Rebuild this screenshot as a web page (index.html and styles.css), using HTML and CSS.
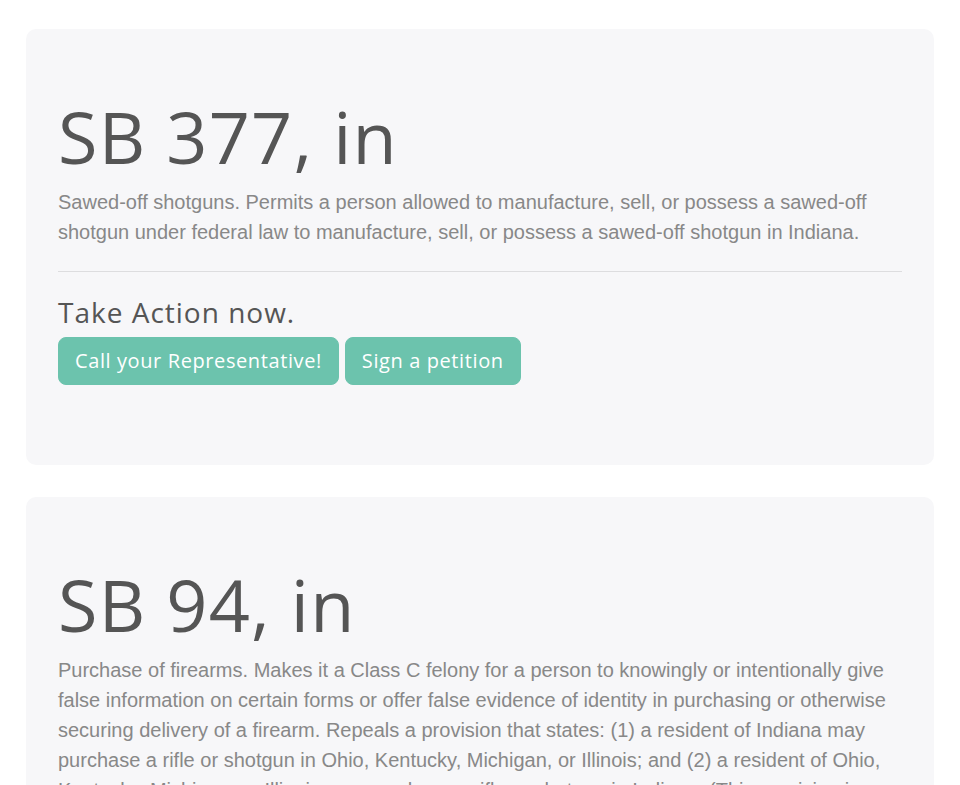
FILE: index.html
```html
<!DOCTYPE html>
<html lang="en">
<head>
<meta charset="utf-8">
<title>Bills</title>
<link rel="stylesheet" href="styles.css">
</head>
<body>
<main class="page">
  <section class="card">
    <h1 class="bill-title">SB 377, in</h1>
    <p class="lead">Sawed-off shotguns. Permits a person allowed to manufacture, sell, or possess a sawed-off shotgun under federal law to manufacture, sell, or possess a sawed-off shotgun in Indiana.</p>
    <hr class="divider">
    <h3 class="action-title">Take Action now.</h3>
    <p class="actions">
      <a class="btn" href="#">Call your Representative!</a>
      <a class="btn" href="#">Sign a petition</a>
    </p>
  </section>
  <section class="card">
    <h1 class="bill-title">SB 94, in</h1>
    <p class="lead">Purchase of firearms. Makes it a Class C felony for a person to knowingly or intentionally give false information on certain forms or offer false evidence of identity in purchasing or otherwise securing delivery of a firearm. Repeals a provision that states: (1) a resident of Indiana may purchase a rifle or shotgun in Ohio, Kentucky, Michigan, or Illinois; and (2) a resident of Ohio, Kentucky, Michigan, or Illinois may purchase a rifle or shotgun in Indiana. (This provision is superseded by federal law.)</p>
    <hr class="divider">
    <h3 class="action-title">Take Action now.</h3>
    <p class="actions">
      <a class="btn" href="#">Call your Representative!</a>
      <a class="btn" href="#">Sign a petition</a>
    </p>
  </section>
</main>
</body>
</html>
```
FILE: styles.css
```css
html, body {
  margin: 0;
  padding: 0;
  background: #ffffff;
}
.page {
  padding: 29px 26px 0 26px;
}
.card {
  background: #f7f7f9;
  border-radius: 10px;
  padding: 64px 32px;
  margin-bottom: 32px;
}
.bill-title {
  font-family: "Open Sans", sans-serif;
  font-weight: 400;
  font-size: 72px;
  line-height: 1.2;
  color: #555555;
  margin: 0 0 8px 0;
  letter-spacing: 1.2px;
}
.lead {
  font-family: "Liberation Sans", Arial, sans-serif;
  font-size: 20px;
  line-height: 30px;
  color: #888888;
  margin: 0 0 16px 0;
}
.divider {
  border: 0;
  border-top: 1px solid rgba(0,0,0,0.1);
  margin: 24px 0;
}
.action-title {
  font-family: "Open Sans", sans-serif;
  font-weight: 400;
  font-size: 28px;
  line-height: 32.6px;
  letter-spacing: 1px;
  color: #555555;
  margin: 0 0 8px 0;
}
.actions {
  margin: 0 0 16px 0;
  display: flex;
  gap: 6px;
}
.btn {
  display: inline-block;
  font-family: "Open Sans", sans-serif;
  font-size: 20px;
  line-height: 30px;
  letter-spacing: 0.6px;
  padding: 8px 16px;
  border: 1px solid #6cc3ad;
  background: #6cc3ad;
  color: #ffffff;
  border-radius: 8px;
  text-decoration: none;
}
```
